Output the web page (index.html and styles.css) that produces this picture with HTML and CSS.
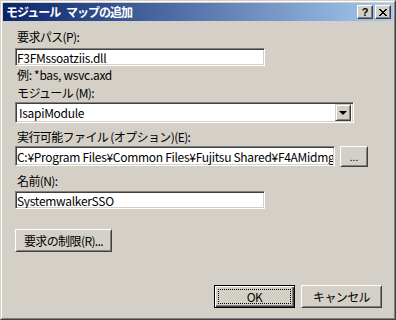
FILE: index.html
```html
<!DOCTYPE html>
<html lang="ja">
<head>
    <meta charset="UTF-8">
    <title>モジュール マップの追加</title>
    <link rel="stylesheet" href="styles.css">
</head>
<body>
    <div class="window">
        <div class="window-inner">
            <div class="titlebar">
                <span class="title">モジュール マップの追加</span>
                <button class="caption-btn help">?</button>
                <button class="caption-btn close">
                    <svg width="8" height="7" viewBox="0 0 8 7">
                        <path d="M0 0h2v1h-2zM6 0h2v1h-2zM1 1h2v1h-2zM5 1h2v1h-2zM2 2h4v1h-4zM3 3h2v1h-2zM2 4h4v1h-4zM1 5h2v1h-2zM5 5h2v1h-2zM0 6h2v1h-2zM6 6h2v1h-2z" fill="#000"/>
                    </svg>
                </button>
            </div>

            <div class="content">
                <label class="label first">要求パス(P):</label>
                <input class="edit short" type="text" value="F3FMssoatziis.dll">
                <p class="hint">例: *bas, wsvc.axd</p>

                <label class="label">モジュール (M):</label>
                <div class="combo">
                    <span class="combo-value">IsapiModule</span>
                    <span class="combo-arrow"></span>
                </div>

                <label class="label gap">実行可能ファイル (オプション)(E):</label>
                <div class="file-row">
                    <input class="edit path" type="text" value="C:¥Program Files¥Common Files¥Fujitsu Shared¥F4AMidmg¥cmd¥F3FMssoatziis.dll">
                    <button class="btn browse">...</button>
                </div>

                <label class="label gap">名前(N):</label>
                <input class="edit short name" type="text" value="SystemwalkerSSO">

                <button class="btn restrict">要求の制限(R)...</button>

                <div class="footer">
                    <button class="btn default">OK</button>
                    <button class="btn">キャンセル</button>
                </div>
            </div>
        </div>
    </div>
</body>
</html>
```

FILE: styles.css
```css
* {
    margin: 0;
    padding: 0;
    box-sizing: border-box;
}

body {
    background-color: #d4d0c8;
    font-family: "Noto Sans CJK JP", "Liberation Sans", sans-serif;
    font-size: 12px;
    line-height: 14px;
    color: #000;
}

.window {
    width: 396px;
    height: 320px;
    border: 1px solid;
    border-color: #d4d0c8 #404040 #404040 #d4d0c8;
}

.window-inner {
    height: 100%;
    border: 1px solid;
    border-color: #fff #808080 #808080 #fff;
    padding: 1px;
    display: flex;
    flex-direction: column;
}

.titlebar {
    height: 18px;
    display: flex;
    align-items: center;
    padding: 0 2px 0 1px;
    background: linear-gradient(to right, #0a246a, #a6caf0);
}

.title {
    flex: 1;
    color: #fff;
    font-weight: bold;
    letter-spacing: -1px;
    word-spacing: 4px;
    padding-left: 2px;
}

.caption-btn {
    width: 16px;
    height: 14px;
    display: flex;
    align-items: center;
    justify-content: center;
    background-color: #d4d0c8;
    border: 1px solid;
    border-color: #fff #404040 #404040 #fff;
    box-shadow: inset -1px -1px #808080;
    font-family: "Liberation Sans", sans-serif;
    font-weight: bold;
    font-size: 11px;
    line-height: 10px;
}

.caption-btn.close {
    margin-left: 2px;
}

.content {
    flex: 1;
    display: flex;
    flex-direction: column;
    align-items: flex-start;
    padding: 9px 0 0 12px;
}

.label {
    margin-left: 2px;
    letter-spacing: -0.6px;
    margin-top: 4px;
    margin-bottom: 4px;
}

.label.first {
    margin-top: 0;
}

.label.gap {
    margin-top: 7px;
    margin-bottom: 2px;
}

.hint {
    margin: 2px 0 0 2px;
    letter-spacing: -0.3px;
}

.edit {
    height: 18px;
    font: inherit;
    letter-spacing: -0.3px;
    padding: 0 1px;
    color: #000;
    background-color: #fff;
    border: 1px solid;
    border-color: #808080 #fff #fff #808080;
    box-shadow: inset 1px 1px #404040, inset -1px -1px #d4d0c8;
    outline: none;
}

.edit.short {
    width: 250px;
}

.edit.name {
    margin-top: 1px;
}

.combo {
    width: 339px;
    height: 21px;
    display: flex;
    align-items: center;
    background-color: #fff;
    border: 1px solid;
    border-color: #808080 #fff #fff #808080;
    box-shadow: inset 1px 1px #404040, inset -1px -1px #d4d0c8;
    padding: 2px;
    margin-top: -2px;
}

.combo-value {
    flex: 1;
    padding-left: 1px;
    letter-spacing: -0.3px;
}

.combo-arrow {
    width: 16px;
    height: 17px;
    display: flex;
    align-items: center;
    justify-content: center;
    background-color: #d4d0c8;
    border: 1px solid;
    border-color: #d4d0c8 #404040 #404040 #d4d0c8;
    box-shadow: inset 1px 1px #fff, inset -1px -1px #808080;
}

.combo-arrow::before {
    content: "";
    border-left: 4px solid transparent;
    border-right: 4px solid transparent;
    border-top: 4px solid #000;
    margin-top: 1px;
}

.file-row {
    display: flex;
    gap: 5px;
}

.edit.path {
    width: 320px;
    height: 20px;
}

.btn {
    height: 23px;
    font: inherit;
    color: #000;
    background-color: #d4d0c8;
    border: 1px solid;
    border-color: #fff #404040 #404040 #fff;
    box-shadow: inset 1px 1px #d4d0c8, inset -1px -1px #808080;
}

.btn.browse {
    width: 28px;
    height: 21px;
    font-size: 10px;
    line-height: 10px;
}

.restrict {
    width: 97px;
    margin-top: 20px;
    letter-spacing: -0.6px;
}

.footer {
    align-self: flex-end;
    display: flex;
    gap: 6px;
    margin: 33px 11px 0 0;
}

.footer .btn {
    width: 81px;
    letter-spacing: -0.6px;
}

.btn.default {
    border-color: #000;
    box-shadow: inset 1px 1px #fff, inset -1px -1px #404040, inset -2px -2px #808080;
    outline: 1px dotted #000;
    outline-offset: -5px;
}
```
